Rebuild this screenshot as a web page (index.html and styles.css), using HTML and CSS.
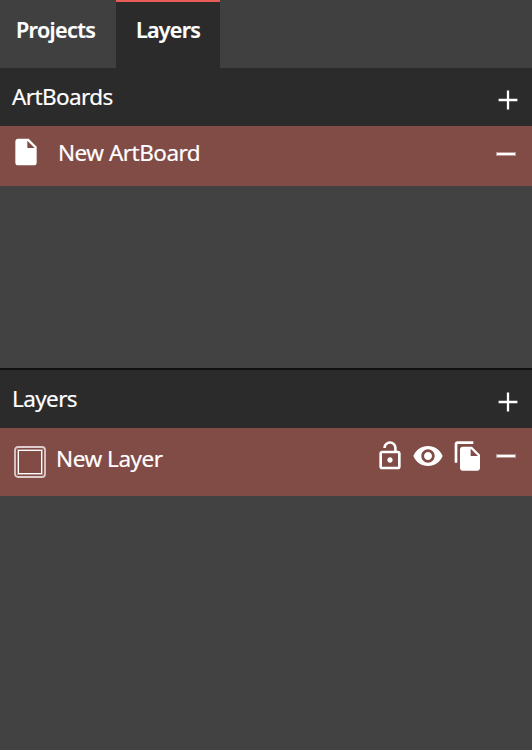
FILE: index.html
```html
<!DOCTYPE html>
<html lang="en">
<head>
<meta charset="utf-8">
<title>Layers</title>
<link rel="stylesheet" href="styles.css">
</head>
<body>
<div class="panel">
  <nav class="tabs">
    <div class="tab tab-projects"><span>Projects</span></div>
    <div class="tab active"><span>Layers</span></div>
  </nav>
  <section class="artboards">
    <header class="head">
      <span class="label-artboards">ArtBoards</span>
      <svg class="plus" viewBox="0 0 20 20"><path d="M10 .6v18.8M.6 10h18.8"/></svg>
    </header>
    <div class="row row-artboard">
      <svg class="icon" viewBox="0 0 24 24"><path d="M6 2c-1.1 0-1.99.9-1.99 2L4 20c0 1.1.89 2 1.99 2H18c1.1 0 2-.9 2-2V8l-6-6H6zm7 7V3.5L18.5 9H13z"/></svg>
      <span class="name name-artboard">New ArtBoard</span>
      <i class="minus"></i>
    </div>
  </section>
  <section class="layers">
    <header class="head">
      <span class="label-layers">Layers</span>
      <svg class="plus" viewBox="0 0 20 20"><path d="M10 .6v18.8M.6 10h18.8"/></svg>
    </header>
    <div class="row row-layer">
      <svg class="thumb" viewBox="0 0 32 32"><rect class="outer" x="1" y="1" width="30" height="30" rx="3"/><rect class="inner-soft" x="4" y="4" width="24" height="24"/><rect class="inner" x="4.5" y="4.5" width="23" height="23"/></svg>
      <span class="name name-layer">New Layer</span>
      <div class="actions">
        <svg class="icon" viewBox="0 0 24 24"><path d="M12 17c1.1 0 2-.9 2-2s-.9-2-2-2-2 .9-2 2 .9 2 2 2zm6-9h-1V6c0-2.76-2.24-5-5-5S7 3.24 7 6h1.9c0-1.71 1.39-3.1 3.1-3.1 1.71 0 3.1 1.39 3.1 3.1v2H6c-1.1 0-2 .9-2 2v10c0 1.1.9 2 2 2h12c1.1 0 2-.9 2-2V10c0-1.1-.9-2-2-2zm0 12H6V10h12v10z"/></svg>
        <svg class="icon" viewBox="0 0 24 24"><path d="M12 4.5C7 4.5 2.73 7.61 1 12c1.73 4.39 6 7.5 11 7.5s9.27-3.11 11-7.5c-1.73-4.39-6-7.5-11-7.5zM12 17c-2.76 0-5-2.24-5-5s2.24-5 5-5 5 2.24 5 5-2.24 5-5 5zm0-8c-1.66 0-3 1.34-3 3s1.34 3 3 3 3-1.34 3-3-1.34-3-3-3z"/></svg>
        <svg class="icon copy" viewBox="0 0 24 24"><path d="M16 1H4c-1.1 0-2 .9-2 2v14h2V3h12V1zm-1 4l6 6v10c0 1.1-.9 2-2 2H7.99C6.89 23 6 22.1 6 21V7c0-1.1.89-2 1.99-2h7zm-1 7h5.5L14 6.5V12z"/></svg>
      </div>
      <i class="minus"></i>
    </div>
  </section>
</div>
</body>
</html>
```
FILE: styles.css
```css
* { box-sizing: border-box; }
body {
  margin: 0;
  background: #424242;
  color: #fff;
  font: 22.5px/30px "Noto Sans", sans-serif;
  -webkit-text-stroke: 0.2px #fff;
}
.panel {
  display: flex;
  flex-direction: column;
  height: 750px;
  overflow: hidden;
  border-bottom: 1px solid #484244;
}
.tabs { display: flex; height: 68px; background: #404040; }
.tab {
  padding: 15px 0 0 16px;
  width: 116px;
  font-size: 21.5px;
  font-weight: 600;
  letter-spacing: -0.75px;
}
.tab.active {
  width: 104px;
  padding: 13px 0 0 20px;
  border-top: 2px solid #e85d58;
  background: #2b2b2b;
}
.tab-projects { letter-spacing: -0.6px; }
.artboards { height: 300px; }
.head {
  display: flex;
  justify-content: space-between;
  height: 58px;
  padding: 14px 14px 0 12px;
  background: #2b2b2b;
}
.label-artboards, .label-layers { letter-spacing: -0.6px; }
.plus {
  width: 20px;
  height: 20px;
  margin-top: 8px;
  fill: none;
  stroke: #fff;
  stroke-width: 2.3;
}
.row { display: flex; background: #814b46; }
.name { white-space: nowrap; }
.icon { width: 32px; height: 32px; fill: #fff; flex: none; }
.minus {
  width: 20px;
  height: 4px;
  margin-left: auto;
  border: 1px solid #b99592;
  background: #fff;
}
.row-artboard { height: 60px; padding: 10px 16px 0 10px; }
.name-artboard { margin: 2px 0 0 16px; letter-spacing: -0.5px; }
.row-artboard .minus { margin-top: 16px; }
.layers { border-top: 2px solid #111; }
.row-layer { height: 68px; padding: 12px 16px 0 14px; }
.thumb { width: 32px; height: 32px; margin-top: 6px; fill: none; }
.outer { stroke: #dfcccc; stroke-width: 1.8; }
.inner-soft { stroke: #b4908e; stroke-width: 2; }
.inner { stroke: #fff; stroke-width: 1; }
.name-layer { width: 110px; margin: 4px 0 0 10px; letter-spacing: -0.45px; }
.actions { display: flex; gap: 6px; margin-left: 208px; }
.copy { margin-left: 2px; }
.row-layer .minus { margin-top: 14px; }
```
